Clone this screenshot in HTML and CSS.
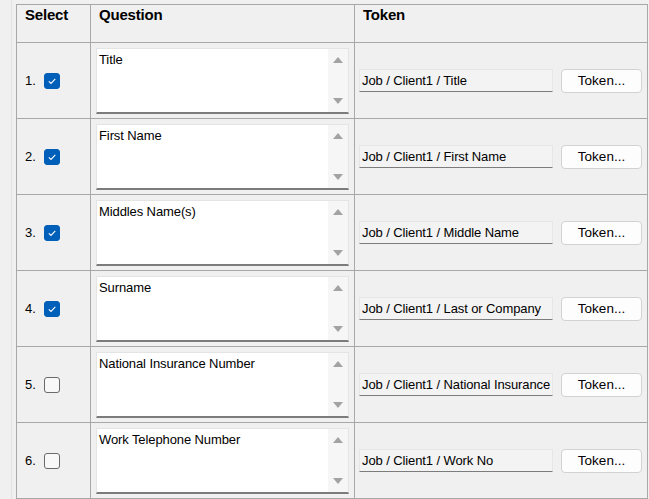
FILE: index.html
```html
<!DOCTYPE html>
<html>
<head>
<meta charset="utf-8">
<link rel="stylesheet" href="styles.css">
</head>
<body>
<div class="frame">
  <div class="edge"></div>
  <div class="grid">
    <div class="hcell">Select</div>
    <div class="hcell">Question</div>
    <div class="hcell">Token</div>

    <div class="cell sel"><span class="num">1.</span><span class="cb on"><svg viewBox="0 0 16 16" width="16" height="16"><path d="M4.8 8.3 L7 10.4 L11.3 5.9" fill="none" stroke="#fff" stroke-width="1.1"/></svg></span></div>
    <div class="cell q"><div class="ta"><div class="tatext">Title</div><div class="sb"><svg viewBox="0 0 10 6" class="up"><path d="M0 6 L5 0 L10 6Z"/></svg><svg viewBox="0 0 10 6" class="dn"><path d="M0 0 L10 0 L5 6Z"/></svg></div></div></div>
    <div class="cell tok"><div class="field">Job / Client1 / Title</div><button class="btn">Token...</button></div>

    <div class="cell sel"><span class="num">2.</span><span class="cb on"><svg viewBox="0 0 16 16" width="16" height="16"><path d="M4.8 8.3 L7 10.4 L11.3 5.9" fill="none" stroke="#fff" stroke-width="1.1"/></svg></span></div>
    <div class="cell q"><div class="ta"><div class="tatext">First Name</div><div class="sb"><svg viewBox="0 0 10 6" class="up"><path d="M0 6 L5 0 L10 6Z"/></svg><svg viewBox="0 0 10 6" class="dn"><path d="M0 0 L10 0 L5 6Z"/></svg></div></div></div>
    <div class="cell tok"><div class="field">Job / Client1 / First Name</div><button class="btn">Token...</button></div>

    <div class="cell sel"><span class="num">3.</span><span class="cb on"><svg viewBox="0 0 16 16" width="16" height="16"><path d="M4.8 8.3 L7 10.4 L11.3 5.9" fill="none" stroke="#fff" stroke-width="1.1"/></svg></span></div>
    <div class="cell q"><div class="ta"><div class="tatext">Middles Name(s)</div><div class="sb"><svg viewBox="0 0 10 6" class="up"><path d="M0 6 L5 0 L10 6Z"/></svg><svg viewBox="0 0 10 6" class="dn"><path d="M0 0 L10 0 L5 6Z"/></svg></div></div></div>
    <div class="cell tok"><div class="field">Job / Client1 / Middle Name</div><button class="btn">Token...</button></div>

    <div class="cell sel"><span class="num">4.</span><span class="cb on"><svg viewBox="0 0 16 16" width="16" height="16"><path d="M4.8 8.3 L7 10.4 L11.3 5.9" fill="none" stroke="#fff" stroke-width="1.1"/></svg></span></div>
    <div class="cell q"><div class="ta"><div class="tatext">Surname</div><div class="sb"><svg viewBox="0 0 10 6" class="up"><path d="M0 6 L5 0 L10 6Z"/></svg><svg viewBox="0 0 10 6" class="dn"><path d="M0 0 L10 0 L5 6Z"/></svg></div></div></div>
    <div class="cell tok"><div class="field">Job / Client1 / Last or Company</div><button class="btn">Token...</button></div>

    <div class="cell sel"><span class="num">5.</span><span class="cb"></span></div>
    <div class="cell q"><div class="ta"><div class="tatext">National Insurance Number</div><div class="sb"><svg viewBox="0 0 10 6" class="up"><path d="M0 6 L5 0 L10 6Z"/></svg><svg viewBox="0 0 10 6" class="dn"><path d="M0 0 L10 0 L5 6Z"/></svg></div></div></div>
    <div class="cell tok"><div class="field">Job / Client1 / National Insurance Number</div><button class="btn">Token...</button></div>

    <div class="cell sel"><span class="num">6.</span><span class="cb"></span></div>
    <div class="cell q"><div class="ta"><div class="tatext">Work Telephone Number</div><div class="sb"><svg viewBox="0 0 10 6" class="up"><path d="M0 6 L5 0 L10 6Z"/></svg><svg viewBox="0 0 10 6" class="dn"><path d="M0 0 L10 0 L5 6Z"/></svg></div></div></div>
    <div class="cell tok"><div class="field">Job / Client1 / Work No</div><button class="btn">Token...</button></div>
  </div>
</div>
</body>
</html>
```

FILE: styles.css
```css
html, body {
  margin: 0;
  padding: 0;
  background: #f0f0f0;
  overflow: hidden;
}
body {
  font-family: "Liberation Sans", Arial, sans-serif;
  font-size: 13px;
  color: #000;
}
.frame {
  display: flex;
  width: 649px;
  height: 499px;
}
.edge {
  width: 11px;
  border-right: 1px solid #e2e2e2;
  margin-right: 4px;
  flex: none;
}
.grid {
  margin-top: 4px;
  display: grid;
  grid-template-columns: 73px 263px 292px;
  grid-template-rows: 37px repeat(6, 75px);
  gap: 1px;
  background: #a8a8a8;
  border: 1px solid #a8a8a8;
  align-self: flex-start;
}
.hcell {
  background: #f0f0f0;
  font-weight: bold;
  font-size: 15px;
  padding: 1px 0 0 8px;
  letter-spacing: -0.2px;
}
.cell {
  background: #f0f0f0;
}
.sel {
  display: flex;
  align-items: center;
  padding-left: 8px;
  gap: 3px;
}
.num {
  font-size: 13px;
  width: 16px;
}
.cb {
  width: 14px;
  height: 14px;
  border: 1px solid #6a6a6a;
  border-radius: 3px;
  background: #f8f8f8;
  display: inline-block;
  position: relative;
}
.cb.on {
  background: #005fb8;
  border-color: #005fb8;
}
.cb svg {
  position: absolute;
  left: -1px;
  top: -1px;
}
.q {
  padding: 5px 5px 0 5px;
}
.ta {
  height: 63px;
  background: #fff;
  border: 1px solid #e4e4e4;
  border-bottom: 2px solid #7c7c7c;
  display: flex;
}
.tatext {
  flex: 1;
  padding: 3px 0 0 2px;
  font-size: 13px;
  letter-spacing: -0.1px;
}
.sb {
  width: 20px;
  background: #f6f6f6;
  display: flex;
  flex-direction: column;
  justify-content: space-between;
  align-items: center;
  padding: 8px 0 8px;
}
.sb svg {
  width: 10px;
  height: 6px;
  fill: #a3a3a3;
}
.tok {
  display: flex;
  align-items: center;
  padding-left: 4px;
  gap: 8px;
}
.field {
  width: 190px;
  height: 21px;
  line-height: 21px;
  background: #f3f3f3;
  border: 1px solid #e6e6e6;
  border-bottom: 1px solid #7c7c7c;
  padding-left: 2px;
  white-space: nowrap;
  overflow: hidden;
  font-size: 13px;
  letter-spacing: -0.1px;
}
.btn {
  width: 81px;
  height: 24px;
  background: #fdfdfd;
  border: 1px solid #d2d2d2;
  border-radius: 4px;
  font-family: "Liberation Sans", Arial, sans-serif;
  font-size: 13.5px;
  color: #000;
  padding: 0;
}
```
